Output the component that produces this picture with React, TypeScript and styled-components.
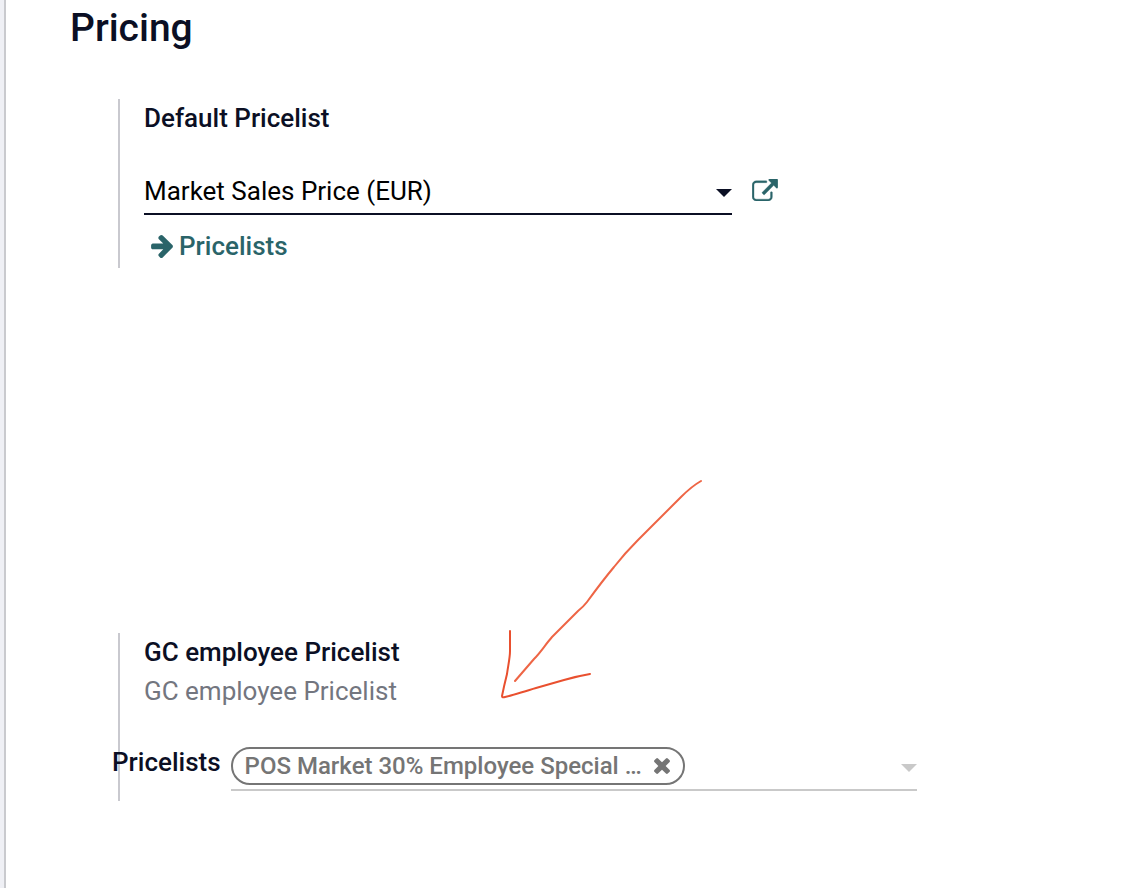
import React from "react";
import styled, { createGlobalStyle } from "styled-components";

const ink = "#0b0f24";
const teal = "#2a6469";
const chipGrey = "#757575";

const GlobalStyle = createGlobalStyle`
  *, *::before, *::after { box-sizing: border-box; }
  body {
    margin: 0;
    background: #fff;
    color: ${ink};
    font-family: Roboto, "Liberation Sans", sans-serif;
    font-size: 26px;
    line-height: 38px;
  }
`;

const Page = styled.div`
  position: relative;
  display: flex;
  min-height: 100vh;
`;

const SideEdge = styled.div`
  flex: none;
  width: 6px;
  background: #eff0f5;
  border-right: 2px solid #c9cace;
`;

const Main = styled.main`
  flex: 1;
  min-width: 0;
  padding: 0 64px;
`;

const Title = styled.h2`
  margin: 0 0 42px;
  font-size: 39px;
  line-height: 57px;
  font-weight: 500;
`;

const Settings = styled.div`
  display: flex;
  flex-direction: column;
  gap: 365px;
  padding-left: 48px;
`;

const Setting = styled.section`
  min-height: 168px;
  padding-left: 24px;
  border-left: 2px solid #c9c9cf;
`;

const SettingLabel = styled.label`
  display: block;
  font-weight: 500;
`;

const Hint = styled.p`
  margin: 0;
  line-height: 40px;
  color: #73767f;
`;

const FieldRow = styled.div`
  display: flex;
  align-items: center;
  gap: 20px;
  margin-top: 32px;
`;

const SelectBox = styled.div`
  display: grid;
  align-items: center;
  flex: 0 1 588px;
  height: 46px;
  border-bottom: 2px solid ${ink};

  > * { grid-area: 1 / 1; }
  > svg { justify-self: end; pointer-events: none; }
`;

const Select = styled.select`
  appearance: none;
  width: 100%;
  height: 44px;
  margin: 0;
  padding: 0 24px 0 0;
  border: 0;
  outline: 0;
  background: transparent;
  color: #000;
  font: inherit;
`;

const IconButton = styled.button`
  display: flex;
  flex: none;
  align-items: center;
  margin: 0;
  padding: 0;
  border: 0;
  background: none;
  color: inherit;
  cursor: pointer;
`;

const OpenButton = styled(IconButton)`
  padding-bottom: 4px;
  color: ${teal};
`;

const ActionLink = styled.a`
  display: inline-flex;
  align-items: center;
  gap: 6px;
  margin-top: 12px;
  padding-left: 7px;
  color: ${teal};
  font-weight: 500;
  text-decoration: none;
`;

const TagRow = styled.div`
  display: flex;
  gap: 10px;
  margin: 32px 0 0 -32px;
`;

const TagField = styled.div`
  display: flex;
  align-items: center;
  flex: 0 1 686px;
  min-width: 0;
  height: 48px;
  padding: 4px 0;
  border-bottom: 2px solid #c9c9c9;
  color: #c9c9c9;
`;

const Tag = styled.span`
  display: flex;
  flex: none;
  align-items: center;
  gap: 12px;
  height: 38px;
  padding: 0 13px 0 12px;
  border: 2px solid ${chipGrey};
  border-radius: 19px;
  color: ${chipGrey};
  font-size: 24px;
  line-height: 34px;
  font-weight: 500;
`;

const TagInput = styled.input`
  flex: 1;
  min-width: 0;
  margin: 0;
  padding: 0 8px;
  border: 0;
  outline: 0;
  background: transparent;
  color: ${ink};
  font: inherit;
`;

const Annotation = styled.svg`
  position: absolute;
  top: 470px;
  left: 480px;
  pointer-events: none;
`;

const Caret = () => (
  <svg width="16" height="12" viewBox="0 0 16 12" fill="currentColor" aria-hidden="true">
    <path d="M0 4h16L8 12z" />
  </svg>
);

const OpenIcon = () => (
  <svg width="26" height="22" viewBox="0 0 1792 1536" fill="currentColor" aria-hidden="true">
    <path d="M1408 928v320q0 119-84.5 203.5t-203.5 84.5h-832q-119 0-203.5-84.5t-84.5-203.5v-832q0-119 84.5-203.5t203.5-84.5h704q14 0 23 9t9 23v64q0 14-9 23t-23 9h-704q-66 0-113 47t-47 113v832q0 66 47 113t113 47h832q66 0 113-47t47-113v-320q0-14 9-23t23-9h64q14 0 23 9t9 23zm384-864v512q0 26-19 45t-45 19-45-19l-176-176-652 652q-10 10-23 10t-23-10l-114-114q-10-10-10-23t10-23l652-652-176-176q-19-19-19-45t19-45 45-19h512q26 0 45 19t19 45z" stroke="currentColor" strokeWidth="24" />
  </svg>
);

const ArrowIcon = () => (
  <svg width="22" height="24" viewBox="0 120 1472 1620" fill="currentColor" aria-hidden="true">
    <path d="M1472 960q0 54-37 91l-651 651q-39 37-91 37-51 0-90-37l-75-75q-38-38-38-91t38-91l293-293h-704q-52 0-84.5-37.5t-32.5-90.5v-128q0-53 32.5-90.5t84.5-37.5h704l-293-294q-38-36-38-90t38-90l75-75q38-38 90-38 53 0 91 38l651 651q37 35 37 90z" />
  </svg>
);

const CloseIcon = () => (
  <svg width="16" height="16" viewBox="110 366 1188 1188" fill="currentColor" aria-hidden="true">
    <path d="M1298 1322q0 40-28 68l-136 136q-28 28-68 28t-68-28l-294-294-294 294q-28 28-68 28t-68-28l-136-136q-28-28-28-68t28-68l294-294-294-294q-28-28-28-68t28-68l136-136q28-28 68-28t68 28l294 294 294-294q28-28 68-28t68 28l136 136q28 28 28 68t-28 68l-294 294 294 294q28 28 28 68z" />
  </svg>
);

export default function App() {
  return (
    <>
      <GlobalStyle />
      <Page>
        <SideEdge />
        <Main>
          <Title>Pricing</Title>
          <Settings>
            <Setting>
              <SettingLabel htmlFor="default-pricelist">Default Pricelist</SettingLabel>
              <FieldRow>
                <SelectBox>
                  <Select id="default-pricelist">
                    <option>Market Sales Price (EUR)</option>
                  </Select>
                  <Caret />
                </SelectBox>
                <OpenButton type="button" aria-label="Open pricelist">
                  <OpenIcon />
                </OpenButton>
              </FieldRow>
              <ActionLink href="#pricelists">
                <ArrowIcon />
                Pricelists
              </ActionLink>
            </Setting>
            <Setting>
              <SettingLabel as="div">GC employee Pricelist</SettingLabel>
              <Hint>GC employee Pricelist</Hint>
              <TagRow>
                <SettingLabel htmlFor="employee-pricelists">Pricelists</SettingLabel>
                <TagField>
                  <Tag>
                    POS Market 30% Employee Special …
                    <IconButton type="button" aria-label="Remove pricelist">
                      <CloseIcon />
                    </IconButton>
                  </Tag>
                  <TagInput id="employee-pricelists" type="text" />
                  <IconButton type="button" aria-label="Show pricelists">
                    <Caret />
                  </IconButton>
                </TagField>
              </TagRow>
            </Setting>
          </Settings>
        </Main>
        <Annotation width="240" height="240" viewBox="0 0 240 240" fill="none" strokeLinecap="round" strokeLinejoin="round" aria-hidden="true">
          <path d="M221 11C214 15 207 21 201 27L158 70Q145 83 134 97C124 109 115 121 107 132Q104 136 98 141L72 167C65 175 61 182 54 189L35 211" stroke="#ee6545" strokeWidth="2" />
          <path d="M30 161L30 181C30 188 28 196 27 204Q24 216 22 226Q22 228 25 227C31 226 42 222 56 218L84 210Q98 206 110 204" stroke="#e9502f" strokeWidth="2" />
        </Annotation>
      </Page>
    </>
  );
}
